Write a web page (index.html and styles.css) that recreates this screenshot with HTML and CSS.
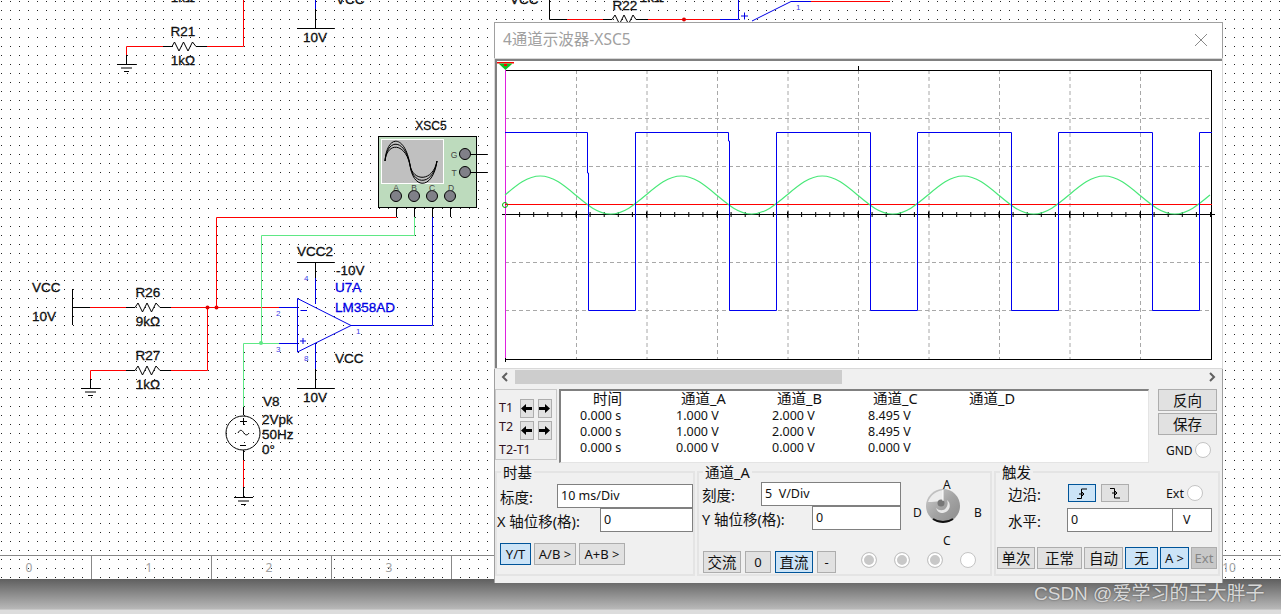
FILE: index.html
```html
<!DOCTYPE html>
<html lang="en">

<head>
    <meta charset="UTF-8">
    <meta name="viewport" content="width=device-width, initial-scale=1.0">
    <title>4通道示波器-XSC5</title>
    <link rel="stylesheet" href="styles.css">
</head>

<body>
    <div class="workspace">
        <svg class="schematic" width="1281" height="555" viewBox="0 0 1281 555">
            <g class="wires">
                <!-- top row, mostly cut off -->
                <path class="black" d="M549.5 0V19.5H567M639 19.5H648" />
                <path class="red" d="M567 19.5H603M648 19.5H720M811 1.5H890" />
                <path class="blue" d="M720 19.5H738.5V0M752 21L791 1.5H811" />
                <path class="blue" d="M741 16H748M744.5 12.5V19.5" />
                <path class="zig" d="M603 19.5H612L615 15L619.5 24L624 15L628.5 24L633 15L636 19.5H639" />
                <circle class="dot-red" cx="684" cy="19.5" r="2" />

                <!-- R21 -->
                <path class="red" d="M126.5 55V46.5H163M207 46.5H243.5V0" />
                <path class="zig" d="M163 46.5H172L174.5 42L179 51L183.5 42L188 51L192.5 42L196 46.5H207" />
                <path class="black" d="M126.5 55V64M117 64.5H136M121 68H132M124 71.5H129" />

                <!-- supply at the top -->
                <path class="blue" d="M315.5 0V9" />
                <path class="black" d="M315.5 9V28.5M297 28.5H334" />

                <!-- R26 / R27 input network -->
                <path class="black" d="M72.5 289V325M72.5 307.5H90M126 307.5H135M162 307.5H171" />
                <path class="zig" d="M135 307.5L138 303L142.5 312L147 303L151.5 312L156 303L160 307.5H162" />
                <path class="red" d="M90 307.5H126M171 307.5H279M207.5 307.5V370.5H171M126 370.5H90.5V379" />
                <path class="black" d="M126 370.5H135M162 370.5H171M90.5 379V388M81 388.5H100M85 392H96M88 395.5H93" />
                <path class="zig" d="M135 370.5L138 366L142.5 375L147 366L151.5 375L156 366L160 370.5H162" />
                <circle class="dot-red" cx="207.5" cy="307.5" r="2" />
                <circle class="dot-red" cx="216.5" cy="307.5" r="2" />

                <!-- scope leads -->
                <path class="red" d="M396.5 217.5H216.5V307.5" />
                <path class="green" d="M414.5 217V235.5H261.5V343.5M279 343.5H243.5V407" />
                <path class="blue" d="M432.5 217V325.5H351" />
                <circle class="dot-green" cx="261" cy="343" r="2" />

                <!-- op amp -->
                <path class="blue" d="M279 307.5H297.5M279 343.5H297.5M297.5 298.5V352L351 325.5ZM300.5 310.5H307M300 341H306M303 338V344" />
                <path class="blue" d="M315.5 278V304M315.5 343V369" />
                <path class="black" d="M315.5 262.5V278M297 262.5H334M315.5 369V388.5M297 388.5H334" />

                <!-- V8 source -->
                <path class="black" d="M243.5 407V415M243.5 450V460M243.5 487V497M234 497.5H253M238 501H249M241 504.5H246" />
                <path class="red" d="M243.5 460V487" />
                <circle class="source" cx="243" cy="433" r="17" />
                <path class="black" d="M240 421.5H247M243.5 418V425M240 445.5H246M238 433C240 429 242 430 243.5 432.5C245 435 247 436 249 433" />
            </g>

            <g class="labels">
                <text x="183" y="2" text-anchor="middle">1kΩ</text>
                <text x="625" y="10" text-anchor="middle">R22</text>
                <text x="652" y="2" text-anchor="middle">1kΩ</text>
                <text x="336" y="4">VCC</text>
                <text x="510" y="4">VCC</text>
                <text x="183" y="36" text-anchor="middle">R21</text>
                <text x="183" y="65" text-anchor="middle">1kΩ</text>
                <text x="315" y="42" text-anchor="middle">10V</text>
                <text x="431" y="130" text-anchor="middle" class="inst-name">XSC5</text>
                <text x="315" y="256" text-anchor="middle">VCC2</text>
                <text x="336" y="275">-10V</text>
                <text x="335" y="292" class="part">U7A</text>
                <text x="335" y="312" class="part">LM358AD</text>
                <text x="335" y="363">VCC</text>
                <text x="315" y="402" text-anchor="middle">10V</text>
                <text x="32" y="292">VCC</text>
                <text x="32" y="321">10V</text>
                <text x="148" y="297" text-anchor="middle">R26</text>
                <text x="148" y="326" text-anchor="middle">9kΩ</text>
                <text x="148" y="360" text-anchor="middle">R27</text>
                <text x="148" y="389" text-anchor="middle">1kΩ</text>
                <text x="263" y="406">V8</text>
                <text x="262" y="424">2Vpk</text>
                <text x="262" y="439">50Hz</text>
                <text x="262" y="454">0°</text>
                <text x="276" y="316" class="pin">2</text>
                <text x="276" y="352" class="pin">3</text>
                <text x="356" y="334" class="pin">1</text>
                <text x="796" y="10" class="pin">1</text>
                <text x="304" y="281" class="pin">4</text>
                <text x="304" y="361" class="pin">8</text>
            </g>

            <!-- XSC5 instrument -->
            <rect class="inst-body" x="378.5" y="136.5" width="98" height="71" />
            <rect class="inst-screen" x="381.5" y="139.5" width="62" height="44" />
            <path class="inst-wave" d="M385 161C387 134 405 134 410 165C413 190 433 190 437 161" />
            <path class="inst-wave" d="M385 161C387 138 405 138 410 165C413 186 433 186 437 161" />
            <path class="inst-wave" d="M385 161C387 142 405 142 410 165C413 182 433 182 437 161" />
            <path class="black" d="M396.5 207V217M414.5 207V217M432.5 207V217M450.5 207V217M465 154.5H487M465 172.5H487" />
            <g class="inst-pins">
                <circle cx="396" cy="196" r="5.5" />
                <circle cx="414" cy="196" r="5.5" />
                <circle cx="432" cy="196" r="5.5" />
                <circle cx="450" cy="196" r="5.5" />
                <circle cx="465" cy="154" r="5.5" />
                <circle cx="465" cy="172" r="5.5" />
            </g>
            <g class="inst-letters">
                <text x="396" y="190.5" text-anchor="middle">A</text>
                <text x="414" y="190.5" text-anchor="middle">B</text>
                <text x="432" y="190.5" text-anchor="middle">C</text>
                <text x="451" y="190.5" text-anchor="middle">D</text>
                <text x="454" y="157.5" text-anchor="middle">G</text>
                <text x="454" y="175.5" text-anchor="middle">T</text>
            </g>
        </svg>

        <div class="ruler">
            <div class="ruler-cell">0</div>
            <div class="ruler-cell">1</div>
            <div class="ruler-cell">2</div>
            <div class="ruler-cell">3</div>
            <div class="ruler-cell">4</div>
            <div class="ruler-cell">5</div>
            <div class="ruler-cell">6</div>
            <div class="ruler-cell">7</div>
            <div class="ruler-cell">8</div>
            <div class="ruler-cell">9</div>
            <div class="ruler-cell">10</div>
        </div>
    </div>

    <div class="statusbar"></div>
    <div class="watermark">CSDN @爱学习的王大胖子</div>

    <div class="scope-window">
        <div class="title-bar">
            <span class="title">4通道示波器-XSC5</span>
            <svg class="close" width="14" height="14" viewBox="0 0 14 14">
                <path d="M1 1L13 13M13 1L1 13" />
            </svg>
        </div>

        <svg class="screen" width="727" height="309" viewBox="495 59 727 309">
            <defs>
                <path id="sinePeriod" d="M0 0c11.5-9.7 22.5-19 35.25-19c12.75 0 23.75 9.3 35.25 19c11.5 9.7 22.5 19 35.25 19c12.75 0 23.75-9.3 35.25-19" />
            </defs>
            <path class="grid" d="M576.5 70V360M647 70V360M717.5 70V360M788 70V360M858.5 70V360M929 70V360M999.5 70V360M1070 70V360M1140.5 70V360" />
            <path class="grid" d="M505 118.5H1212M505 166.5H1212M505 262.5H1212M505 310.5H1212" />
            <rect class="plot-border" x="505.5" y="70.5" width="706" height="289" />
            <path class="plot-tick" d="M858.5 66V70M505.5 358V362" />
            <line class="axis" x1="502" y1="214.5" x2="1215" y2="214.5" />
            <line class="axis-ticks" x1="505" y1="214.5" x2="1212" y2="214.5" />
            <path class="axis-major" d="M576.5 211V218M647 211V218M717.5 211V218M788 211V218M858.5 211V218M929 211V218M999.5 211V218M1070 211V218M1140.5 211V218" />
            <line class="trace-magenta" x1="505.5" y1="70" x2="505.5" y2="358" />
            <line class="trace-red" x1="505" y1="204.5" x2="1212" y2="204.5" />
            <g class="trace-green">
                <use href="#sinePeriod" x="505" y="195" />
                <use href="#sinePeriod" x="646" y="195" />
                <use href="#sinePeriod" x="787" y="195" />
                <use href="#sinePeriod" x="928" y="195" />
                <use href="#sinePeriod" x="1069" y="195" />
            </g>
            <path class="trace-blue" d="M505 132.5H587.5V173H588.5V310.5H635.5V132.5H728.5V141H729.5V310.5H776.5V132.5H870.5V310.5H917.5V132.5H1011.5V310.5H1058.5V132.5H1152.5V310.5H1199.5V132.5H1212" />
            <circle class="marker-ring" cx="505" cy="205" r="2.5" />
            <path class="marker-red" d="M497 62H514V63.5H497Z" />
            <path class="marker-green" d="M498.5 63.5H512.5L505.5 70Z" />
            <rect class="marker-red" x="504" y="64" width="3" height="2" />
        </svg>

        <div class="scrollbar">
            <svg class="chevron" width="10" height="10" viewBox="0 0 10 10"><path d="M7 1L3 5L7 9" /></svg>
            <div class="scroll-track"><div class="scroll-thumb"></div></div>
            <svg class="chevron" width="10" height="10" viewBox="0 0 10 10"><path d="M3 1L7 5L3 9" /></svg>
        </div>

        <div class="readout-row">
            <div class="cursors">
                <div class="cursor-row">
                    <span class="cursor-name">T1</span>
                    <button class="arrow-btn"><svg width="11" height="9" viewBox="0 0 11 9"><path d="M0 4.5L5 0V3H11V6H5V9Z" /></svg></button>
                    <button class="arrow-btn"><svg width="11" height="9" viewBox="0 0 11 9"><path d="M11 4.5L6 0V3H0V6H6V9Z" /></svg></button>
                </div>
                <div class="cursor-row">
                    <span class="cursor-name name-high">T2</span>
                    <button class="arrow-btn"><svg width="11" height="9" viewBox="0 0 11 9"><path d="M0 4.5L5 0V3H11V6H5V9Z" /></svg></button>
                    <button class="arrow-btn"><svg width="11" height="9" viewBox="0 0 11 9"><path d="M11 4.5L6 0V3H0V6H6V9Z" /></svg></button>
                </div>
                <div class="cursor-diff">T2-T1</div>
            </div>

            <div class="readout">
                <div class="head head-time">时间</div><div class="head">通道_A</div><div class="head">通道_B</div><div class="head">通道_C</div><div class="head">通道_D</div>
                <div>0.000 s</div><div>1.000 V</div><div>2.000 V</div><div>8.495 V</div><div></div>
                <div>0.000 s</div><div>1.000 V</div><div>2.000 V</div><div>8.495 V</div><div></div>
                <div>0.000 s</div><div>0.000 V</div><div>0.000 V</div><div>0.000 V</div><div></div>
            </div>

            <div class="side-actions">
                <button class="btn side-btn">反向</button>
                <button class="btn side-btn">保存</button>
                <div class="gnd"><span>GND</span><span class="radio"></span></div>
            </div>
        </div>

        <div class="groups">
            <fieldset class="group timebase">
                <legend>时基</legend>
                <div class="field field-first">
                    <span class="label">标度:</span>
                    <div class="value w-136">10 ms/Div</div>
                </div>
                <div class="field">
                    <span class="label">X 轴位移(格):</span>
                    <div class="value w-93">0</div>
                </div>
                <div class="btn-row">
                    <button class="btn on w-31">Y/T</button>
                    <button class="btn w-42">A/B &gt;</button>
                    <button class="btn w-46">A+B &gt;</button>
                </div>
            </fieldset>

            <fieldset class="group channel">
                <legend>通道_A</legend>
                <div class="channel-top">
                    <div class="channel-fields">
                        <div class="field">
                            <span class="label">刻度:</span>
                            <div class="value w-140">5&nbsp; V/Div</div>
                        </div>
                        <div class="field">
                            <span class="label">Y 轴位移(格):</span>
                            <div class="value w-89">0</div>
                        </div>
                    </div>
                    <div class="knob-box">
                        <span class="knob-letter letter-a">A</span>
                        <span class="knob-letter letter-b">B</span>
                        <span class="knob-letter letter-c">C</span>
                        <span class="knob-letter letter-d">D</span>
                        <svg class="knob" width="36" height="36" viewBox="0 0 36 36">
                            <defs>
                                <linearGradient id="knobFace" x1="0" y1="0" x2="1" y2="1">
                                    <stop offset="0" stop-color="#d0d0d0" />
                                    <stop offset="0.5" stop-color="#a4a4a4" />
                                    <stop offset="1" stop-color="#8a8a8a" />
                                </linearGradient>
                            </defs>
                            <circle cx="18" cy="18" r="17" fill="url(#knobFace)" />
                            <path d="M3 14C6 6 12 3 18 2L18 14C14 13 10 14 3 14Z" fill="#ececec" />
                            <path d="M22 12C27 16 25 24 18 25C14 25 12 23 11 20C14 23 19 23 21 20C23 17 23 15 22 12Z" fill="#e8e8e8" />
                            <circle cx="16" cy="15" r="3.5" fill="#777" />
                            <path d="M18 2V13" stroke="#fff" fill="none" />
                            <path d="M8 31C14 35 22 35 28 31" stroke="#111" stroke-width="2" fill="none" />
                        </svg>
                    </div>
                </div>
                <div class="btn-row channel-buttons">
                    <button class="btn zh w-38">交流</button>
                    <button class="btn w-26">0</button>
                    <button class="btn zh on w-38">直流</button>
                    <button class="btn w-19">-</button>
                    <div class="radios">
                        <span class="radio off"></span>
                        <span class="radio off"></span>
                        <span class="radio off"></span>
                        <span class="radio"></span>
                    </div>
                </div>
            </fieldset>

            <fieldset class="group trigger">
                <legend>触发</legend>
                <div class="edge-row">
                    <span class="label">边沿:</span>
                    <button class="btn on edge-btn"><svg width="12" height="11" viewBox="0 0 12 11"><path d="M1 10.5H5.5V1H11M3 6H8M6 4L8 6L6 8" /></svg></button>
                    <button class="btn edge-btn"><svg width="12" height="11" viewBox="0 0 12 11"><path d="M1 .5H5.5V10H11M3 5H8M6 3L8 5L6 7" /></svg></button>
                    <span class="ext"><span>Ext</span><span class="radio"></span></span>
                </div>
                <div class="level-row">
                    <span class="label">水平:</span>
                    <div class="level">
                        <div class="value w-106">0</div>
                        <div class="value w-39 unit">V</div>
                    </div>
                </div>
                <div class="btn-row trigger-buttons">
                    <button class="btn zh w-38">单次</button>
                    <button class="btn zh w-45">正常</button>
                    <button class="btn zh w-39">自动</button>
                    <button class="btn zh on w-33">无</button>
                    <button class="btn on w-29">A &gt;</button>
                    <button class="btn disabled w-26">Ext</button>
                </div>
            </fieldset>
        </div>
    </div>
</body>

</html>
```
FILE: styles.css
```css
html,
body {
    margin: 0;
    height: 100%;
    overflow: hidden;
    background: #dcdcdc;
}

body {
    font-family: "Noto Sans", "Noto Sans CJK SC", sans-serif;
    color: #111;
}

.workspace {
    height: 579px;
    overflow: hidden;
    background-color: #fff;
    background-image: url("data:image/svg+xml,%3Csvg xmlns='http://www.w3.org/2000/svg' width='9' height='9'%3E%3Crect x='1' y='1' width='1' height='1' fill='%23222'/%3E%3C/svg%3E");
}

.schematic {
    display: block;
}

.wires path {
    fill: none;
    stroke-width: 1;
}

.black {
    fill: none;
    stroke: #000;
}

.red {
    stroke: #f00;
}

.blue {
    stroke: #0000e6;
}

.green {
    stroke: #5fe885;
}

.zig {
    stroke: #000;
}

.dot-red {
    fill: #e00000;
}

.dot-green {
    fill: #5fe885;
}

.source {
    fill: none;
    stroke: #000;
}

.labels text {
    font-family: "Liberation Sans", sans-serif;
    font-size: 13.5px;
    fill: #111;
    stroke: #111;
    stroke-width: 0.3px;
}

.labels .inst-name {
    font-size: 12px;
}

.labels .part {
    fill: #0000e6;
    stroke: #0000e6;
}

.labels .pin {
    font-size: 8px;
    fill: #3a3ae6;
    stroke: none;
}

.inst-body {
    fill: #bddbbd;
    stroke: #000;
}

.inst-screen {
    fill: #c0c0c0;
    stroke: #fff;
}

.inst-wave {
    fill: none;
    stroke: #000;
}

.inst-pins circle {
    fill: #808088;
    stroke: #000;
}

.inst-letters text {
    font-family: "Liberation Sans", sans-serif;
    font-size: 8.5px;
    fill: #444;
}

.ruler {
    display: flex;
    height: 24px;
    margin-left: -28px;
    border-top: 1px solid #888;
    box-sizing: border-box;
}

.ruler-cell {
    flex: 0 0 120px;
    box-sizing: border-box;
    border-right: 1px solid #888;
    padding-right: 5px;
    text-align: center;
    font-size: 12px;
    line-height: 23px;
    color: #a0a0a0;
}

.statusbar {
    height: 30px;
    background: linear-gradient(#5f5f5f, #b8b8b8);
    border-bottom: 1px solid #c8c8c8;
}

.watermark {
    position: absolute;
    left: 1034px;
    top: 582px;
    font-family: "Liberation Sans", "Noto Sans CJK SC", sans-serif;
    font-size: 19px;
    line-height: 24px;
    color: #d8d8d8;
    text-shadow: 0 0 2px #555;
}

/* instrument window floats over the schematic */
.scope-window {
    position: absolute;
    left: 494px;
    top: 22px;
    width: 729px;
    height: 561px;
    box-sizing: border-box;
    display: flex;
    flex-direction: column;
    background: #f0f0f0;
    border: 1px solid #a0a0a0;
    border-bottom: none;
}

.title-bar {
    flex: 0 0 36px;
    box-sizing: border-box;
    display: flex;
    align-items: center;
    justify-content: space-between;
    padding: 0 14px 0 8px;
    background: #fff;
}

.title {
    margin-bottom: 5px;
    font-size: 15.5px;
    line-height: 20px;
    color: #a0a0a0;
}

.close {
    margin-bottom: 2px;
}

.close path {
    fill: none;
    stroke: #8a8a8a;
    stroke-width: 1;
}

.screen {
    display: block;
    flex: 0 0 309px;
    background: #fff;
    outline: 1px solid #d8d8d8;
    box-shadow: inset 2px 2px 0 #808080;
}

.grid {
    fill: none;
    stroke: #a8a8a8;
    stroke-dasharray: 4 3;
}

.plot-border,
.plot-tick,
.axis-major {
    fill: none;
    stroke: #000;
}

.axis {
    stroke: #000;
}

.axis-ticks {
    stroke: #000;
    stroke-width: 5;
    stroke-dasharray: 1 13.1;
}

.trace-magenta {
    stroke: #e020e0;
}

.trace-red {
    stroke: #f00;
}

.trace-green {
    fill: none;
    stroke: #48e878;
    stroke-width: 1.2;
}

.trace-blue {
    fill: none;
    stroke: #0000f0;
    stroke-width: 1;
}

.marker-ring {
    fill: none;
    stroke: #00b000;
}

.marker-red {
    fill: #f00;
}

.marker-green {
    fill: #10c020;
}

.scrollbar {
    flex: 0 0 15px;
    display: flex;
    align-items: center;
    gap: 5px;
    margin-top: 1px;
    padding: 0 5px;
}

.chevron path {
    fill: none;
    stroke: #606060;
    stroke-width: 2;
}

.scroll-track {
    flex: 1;
    height: 14px;
}

.scroll-thumb {
    width: 327px;
    height: 100%;
    background: #cdcdcd;
}

.readout-row {
    display: flex;
    margin-top: 5px;
    height: 74px;
}

.cursors {
    width: 62px;
    height: 71px;
    box-sizing: border-box;
    border: 1px solid #c8c8c8;
    padding: 7px 0 0 3px;
    font-size: 12.5px;
    color: #301020;
}

.cursor-row {
    display: flex;
    align-items: center;
    height: 22px;
}

.cursor-name {
    width: 22px;
    margin-bottom: 2px;
}

.name-high {
    margin-bottom: 8px;
}

.cursor-diff {
    margin-top: -1px;
    line-height: 20px;
}

.arrow-btn {
    width: 15px;
    height: 19px;
    margin-right: 4px;
    padding: 0;
    display: flex;
    align-items: center;
    justify-content: center;
    background: #e1e1e1;
    border: 1px solid #adadad;
}

.readout {
    width: 590px;
    height: 74px;
    margin-left: 2px;
    box-sizing: border-box;
    display: grid;
    grid-template-columns: repeat(5, 96px);
    grid-auto-rows: 16px;
    padding: 1px 0 0 0;
    background: #fff;
    border-top: 2px solid #808080;
    border-left: 2px solid #808080;
    border-right: 1px solid #e4e4e4;
    border-bottom: 1px solid #e4e4e4;
    font-size: 12.5px;
    line-height: 16px;
    text-indent: 19px;
}

.readout .head {
    margin-top: -2px;
    font-size: 14.5px;
    text-indent: 24px;
}

.readout .head-time {
    text-indent: 32px;
}

.side-actions {
    margin-left: 9px;
    display: flex;
    flex-direction: column;
    gap: 2px;
}

.btn {
    box-sizing: border-box;
    height: 22px;
    padding: 0;
    background: #e1e1e1;
    border: 1px solid #adadad;
    font-family: inherit;
    font-size: 14.5px;
    line-height: 18px;
    color: #111;
}

.btn.on {
    background: #cce4f7;
    border-color: #005499;
}

.btn.disabled {
    background: #c8c8c8;
    color: #858585;
}

.side-btn {
    width: 59px;
}

.gnd {
    display: flex;
    align-items: center;
    gap: 2px;
    height: 26px;
    padding-left: 8px;
    font-size: 12px;
}

.radio {
    display: block;
    box-sizing: border-box;
    width: 16px;
    height: 16px;
    border-radius: 50%;
    background: #fff;
    border: 1px solid #c4c4c4;
}

.radio.off {
    background: #c8c8c8;
    box-shadow: inset 0 0 0 2px #fff;
}

.groups {
    display: flex;
    gap: 2px;
    height: 113px;
}

.group {
    box-sizing: border-box;
    margin: 0;
    padding: 0;
    min-width: 0;
    border: 2px solid #e4e4e4;
    display: flex;
    flex-direction: column;
}

.group legend {
    margin-left: 4px;
    padding: 0 2px;
    font-size: 14.5px;
    line-height: 18px;
}

.timebase {
    width: 200px;
    padding: 3px 0 0 0;
}

.channel {
    width: 295px;
}

.trigger {
    width: 226px;
}

.field {
    display: flex;
    align-items: center;
    justify-content: space-between;
    height: 24px;
}

.label {
    font-size: 14.5px;
    white-space: nowrap;
}

.field-first .label {
    padding-left: 3px;
}

.value {
    box-sizing: border-box;
    height: 24px;
    padding-left: 3px;
    background: #fff;
    border: 1px solid #808080;
    font-size: 12.5px;
    line-height: 21px;
}

.w-136 { width: 136px; }
.w-93 { width: 93px; }
.w-140 { width: 140px; }
.w-89 { width: 89px; }
.w-106 { width: 106px; }
.w-39 { width: 39px; }
.w-19 { width: 19px; }
.w-26 { width: 26px; }
.w-29 { width: 29px; }
.w-31 { width: 31px; }
.w-33 { width: 33px; }
.w-38 { width: 38px; }
.w-42 { width: 42px; }
.w-45 { width: 45px; }
.w-46 { width: 46px; }

.btn-row {
    display: flex;
    align-items: flex-start;
    gap: 3px;
    margin-top: 11px;
    margin-left: 3px;
}

.btn-row .btn {
    font-size: 13px;
}

.btn-row .btn.zh {
    font-size: 14.5px;
}

.channel-top {
    display: flex;
    height: 67px;
    padding-top: 1px;
}

.channel-fields {
    flex: 0 0 202px;
    box-sizing: border-box;
    padding-left: 3px;
}

.knob-box {
    position: relative;
    flex: 0 0 89px;
    height: 67px;
}

.knob {
    position: absolute;
    left: 24px;
    top: 6px;
}

.knob-letter {
    position: absolute;
    font-size: 12px;
    line-height: 14px;
}

.letter-a { left: 42px; top: -4px; }
.letter-b { left: 73px; top: 24px; }
.letter-c { left: 42px; top: 52px; }
.letter-d { left: 12px; top: 24px; }

.channel-buttons {
    margin-top: 2px;
    gap: 4px;
    margin-left: 4px;
}

.radios {
    display: flex;
    gap: 17px;
    margin-left: 21px;
    padding-top: 1px;
}

.edge-row {
    display: flex;
    align-items: center;
    height: 22px;
    padding-left: 12px;
    margin-top: 1px;
}

.edge-btn {
    width: 28px;
    height: 18px;
    margin-right: 5px;
    display: flex;
    align-items: center;
    justify-content: center;
}

.edge-btn:first-of-type {
    margin-left: 27px;
}

.edge-btn path {
    fill: none;
    stroke: #000;
}

.ext {
    display: flex;
    align-items: center;
    gap: 3px;
    margin-left: 32px;
    font-size: 12.5px;
}

.level-row {
    display: flex;
    align-items: center;
    height: 24px;
    padding-left: 12px;
    margin-top: 4px;
}

.level {
    display: flex;
    margin-left: 26px;
}

.unit {
    border-left: none;
    padding-left: 10px;
}

.trigger-buttons {
    margin-top: 15px;
    margin-left: 1px;
    gap: 2px;
}
```
